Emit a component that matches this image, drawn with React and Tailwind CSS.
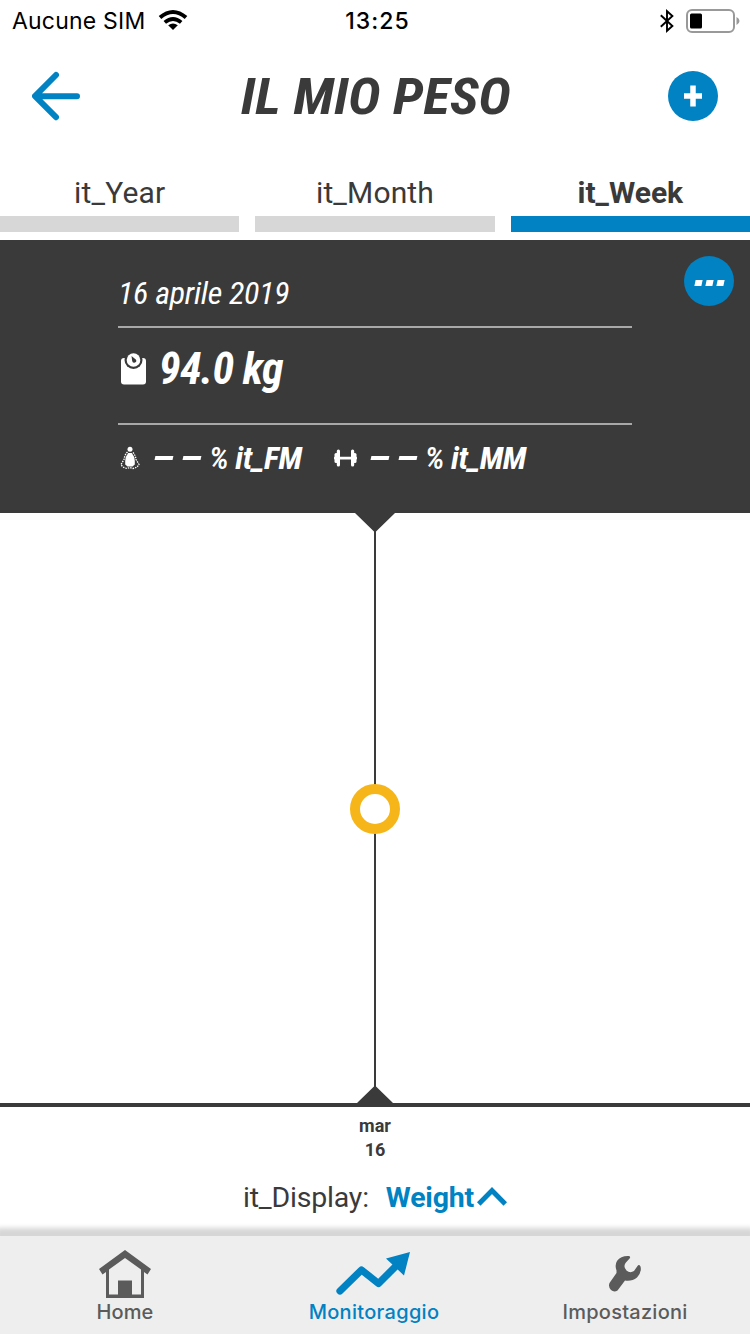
const condensed = "font-['Roboto_Condensed','Roboto',sans-serif] [font-stretch:75%] italic";

function StatusBar() {
  return (
    <div className="flex h-10 items-center justify-between pl-3 pr-2.5 pt-0.5 font-['Inter',sans-serif] text-[23px] text-black">
      <div className="flex w-[260px] items-center gap-[13px]">
        <span className="whitespace-nowrap tracking-[0.2px]">Aucune SIM</span>
        <svg className="-mt-0.5" width="30" height="22" viewBox="0 0 30 22" fill="none" stroke="#000" strokeWidth="4">
          <path d="M2 8.5Q15-2.5 28 8.5" />
          <path d="M6.8 13.4Q15 6.6 23.2 13.4" strokeWidth="3.8" />
          <path d="M10.2 16.2Q15 12.8 19.8 16.2L15 21Z" fill="#000" stroke="none" />
        </svg>
      </div>
      <span className="ml-[3px] font-medium tracking-[1px]">13:25</span>
      <div className="-mt-px flex w-[260px] items-center justify-end gap-3">
        <svg width="14" height="24" viewBox="0 0 14 24" fill="none" stroke="#000" strokeWidth="1.9">
          <path d="M.8 6.2L12.4 17 7 21.8V2.2L12.4 7 .8 17.8" />
        </svg>
        <svg width="54" height="24" viewBox="0 0 54 24">
          <rect x="1" y="1" width="47" height="22" rx="5" fill="none" stroke="#999" strokeWidth="2" />
          <rect x="4" y="4.500" width="12" height="15" rx="1.500" fill="#000" />
          <path d="M50.500 8Q53.500 9.500 53.500 12T50.500 16Z" fill="#999" />
        </svg>
      </div>
    </div>
  );
}

function Header() {
  return (
    <header className="flex h-28 items-center justify-between px-8">
      <svg width="50" height="50" viewBox="0 0 50 50" fill="none" stroke="#0082c3" strokeWidth="6" strokeLinecap="round" strokeLinejoin="round">
        <path d="M24 4L3 25.200 24 46.200M3.500 25.200H45" />
      </svg>
      <h1 className={`${condensed} ml-0.5 mt-0.5 scale-x-[1.090] whitespace-nowrap text-[50.500px] font-bold leading-none text-[#3a3a3a]`}>IL MIO PESO</h1>
      <button className="flex size-[50px] items-center justify-center rounded-full bg-[#0082c3]">
        <svg width="18" height="22" viewBox="0 0 18 22" fill="none" stroke="#fff" strokeWidth="5.500">
          <path d="M9 .5V21.500M0 11H18" />
        </svg>
      </button>
    </header>
  );
}

function Tabs() {
  const tabs = [["it_Year", false], ["it_Month", false], ["it_Week", true]];
  return (
    <nav className="grid h-[88px] grid-cols-3 gap-4 pb-2">
      {tabs.map(([label, active]) => (
        <div key={label} className="flex flex-col justify-end">
          <span className={`flex h-12 items-center justify-center text-[30px] ${active ? "font-bold" : "tracking-[0.150px]"}`}>{label}</span>
          <div className={`h-4 ${active ? "bg-[#0082c3]" : "bg-[#d7d7d7]"}`} />
        </div>
      ))}
    </nav>
  );
}

function Metric({ label, children }) {
  return (
    <div className="flex items-center">
      {children}
      <span className="flex gap-2.5">
        <i className="h-[3.500px] w-[18px] -skew-x-12 bg-white" />
        <i className="h-[3.500px] w-[18px] -skew-x-12 bg-white" />
      </span>
      <span className="ml-2 whitespace-nowrap text-[32px] leading-none tracking-[-0.350px]">
        <span className="font-medium">% </span>
        <b>{label}</b>
      </span>
    </div>
  );
}

function Summary() {
  return (
    <section className={`${condensed} relative h-[273px] bg-[#3a3a3a] px-[118px] text-white`}>
      <div className="flex h-[88px] items-end border-b-2 border-[#a8a8a8] pb-[15px] text-[32px] leading-9 tracking-[-0.270px]">16 aprile 2019</div>
      <div className="flex h-[97px] items-center gap-[13px] border-b-2 border-[#a8a8a8] pb-3.5">
        <svg className="ml-[3px]" width="25" height="32" viewBox="0 0 25 32">
          <rect y="5" width="25" height="26.500" rx="3" fill="#fff" />
          <circle cx="12.500" cy="7" r="9" fill="#3a3a3a" />
          <circle cx="12.500" cy="7" r="6.800" fill="#fff" />
          <path d="M10.500 3L14.800 6.500A2 2 0 1 1 11.200 8Z" fill="#3a3a3a" />
        </svg>
        <span className="whitespace-nowrap text-[44px] font-bold leading-none tracking-[-0.700px]">94.0 kg</span>
      </div>
      <div className="flex h-[66px] items-center pb-px">
        <Metric label="it_FM">
          <svg className="ml-0.5 mr-[15px]" width="20" height="24" viewBox="0 0 20 24" fill="#fff">
            <circle cx="10" cy="3.200" r="2.500" />
            <path d="M8.200 7H11.800Q14.500 10 14.800 15V18.500L12.500 20.500H7.500L5.200 18.500V15Q5.500 10 8.200 7Z" />
            <path d="M7.500 6Q4.500 9 4 13.500L1 18.500Q2.500 21.500 7 22.500L10 21.500 13 22.500Q17.500 21.500 19 18.500L16 13.500Q15.500 9 12.500 6" fill="none" stroke="#fff" strokeWidth="1.300" strokeDasharray="1.500 1" />
          </svg>
        </Metric>
        <div className="w-8" />
        <Metric label="it_MM">
          <svg className="mr-[14px]" width="23" height="18" viewBox="0 0 23 18" fill="#fff">
            <rect x="2.800" y=".5" width="3.200" height="17" rx="1.500" />
            <rect x="17" y=".5" width="3.200" height="17" rx="1.500" />
            <rect x=".5" y="4" width="3.500" height="10" rx="1.500" />
            <rect x="19" y="4" width="3.500" height="10" rx="1.500" />
            <rect y="7.700" width="23" height="2.800" rx="1" />
          </svg>
        </Metric>
      </div>
      <button className="absolute right-4 top-4 flex size-[50px] items-center justify-center gap-[4px] rounded-full bg-[#0082c3] pt-[3px]">
        <i className="h-[6px] w-[7px] -skew-x-12 bg-white" />
        <i className="h-[6px] w-[7px] -skew-x-12 bg-white" />
        <i className="h-[6px] w-[7px] -skew-x-12 bg-white" />
      </button>
    </section>
  );
}

function Chart() {
  return (
    <section className="h-[594px] border-b-4 border-[#3a3a3a]">
      <svg className="block" width="750" height="590" viewBox="0 0 750 590">
        <path d="M355 0H395L375 19.500ZM357 590L375 572.500 393 590Z" fill="#3a3a3a" />
        <path d="M375 18V574" stroke="#3a3a3a" strokeWidth="2" />
        <circle cx="375" cy="296" r="20" fill="#fff" stroke="#f6b519" strokeWidth="10" />
      </svg>
    </section>
  );
}

function BottomBar() {
  return (
    <footer className="grid h-[98px] grid-cols-3 bg-[#eee] font-['Inter',sans-serif] text-[20px] font-medium leading-6 text-[#5b5b5b] shadow-[0_-4px_5px_4px_#d6d6d6]">
      <div className="flex flex-col items-center">
        <svg width="52" height="64" viewBox="0 0 52 64">
          <path d="M0 33L26 14 52 33 48.500 38.500 45 36V62H7V36L3.500 38.500Z" fill="#5b5b5b" />
          <path d="M10 33.500L26 22 42 33.500V58.500H33V44.500H19V58.500H10Z" fill="#eee" />
        </svg>
        <span className="tracking-[0.100px]">Home</span>
      </div>
      <div className="flex flex-col items-center text-[#0082c3]">
        <svg className="-ml-1" width="76" height="64" viewBox="0 0 76 64">
          <path d="M5 55L26.500 34 43.500 47.500 61 30" fill="none" stroke="#0082c3" strokeWidth="7.200" strokeLinecap="round" strokeLinejoin="round" />
          <path d="M75 16L51 22.500 69 39.500Z" fill="#0082c3" />
        </svg>
        <span className="-ml-0.5 tracking-[0.300px]">Monitoraggio</span>
      </div>
      <div className="flex flex-col items-center">
        <svg width="34" height="64" viewBox="0 0 34 64">
          <path d="M21 20Q13 19.500 9 25 6.500 29 8.500 34.500V37L1.500 47Q0 51 3 54 6 56.500 9.500 54.500L17 44.500Q24 45.500 29 41.500 34 36 32.500 30.500 31 28 29.500 30L26 35Q22 37.500 18.500 34.500 15 31 17.500 27L22 22Q22.500 20.500 21 20Z" fill="#5b5b5b" />
        </svg>
        <span className="tracking-[0.250px]">Impostazioni</span>
      </div>
    </footer>
  );
}

export default function App() {
  return (
    <div className="flex h-[1334px] w-[750px] flex-col overflow-hidden bg-white font-['Roboto',sans-serif] text-[#3a3a3a]">
      <StatusBar />
      <Header />
      <Tabs />
      <Summary />
      <Chart />
      <div className="flex flex-1 flex-col items-center">
        <div className="pt-[7px] text-center text-[18px] font-bold leading-6">
          <div>mar</div>
          <div>16</div>
        </div>
        <div className="flex items-center pt-[18px] text-[28.500px] leading-9">
          <span className="tracking-[-0.200px]">it_Display:</span>
          <b className="ml-[17px] tracking-[-0.200px] text-[#0082c3]">Weight</b>
          <svg className="-mt-1 ml-[3px]" width="30" height="20" viewBox="0 0 30 20" fill="none" stroke="#0082c3" strokeWidth="5">
            <path d="M1.700 18L15 4.500 28.300 18" />
          </svg>
        </div>
      </div>
      <BottomBar />
    </div>
  );
}
